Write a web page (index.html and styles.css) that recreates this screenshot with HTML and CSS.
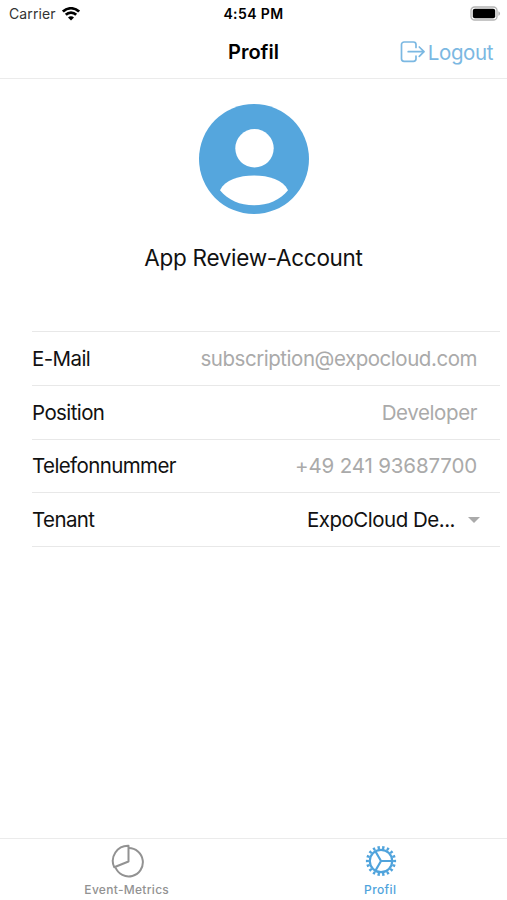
FILE: index.html
```
<!DOCTYPE html>
<html lang="de">
    <head>
        <meta charset="utf-8">
        <title>Profil</title>
        <link rel="stylesheet" href="styles.css">
    </head>
    <body>
        <div class="status">
            <div class="carrier">
                <span>Carrier</span>
                <svg class="wifi" width="18" height="14" viewBox="0 0 18 14">
                    <g fill="none" stroke="#000" stroke-width="2.7">
                        <path d="M0.9 4.6a11.5 11.5 0 0 1 16.2 0"/>
                        <path d="M3.8 7.8a7.4 7.4 0 0 1 10.4 0"/>
                    </g>
                    <path d="M9 13.6L6 10.6a4.2 4.2 0 0 1 6 0z"/>
                </svg>
            </div>
            <div class="time">4:54 PM</div>
            <svg class="battery" width="31" height="15" viewBox="0 0 31 15">
                <rect x="1" y="1" width="26" height="13" rx="3.6" fill="#fff" stroke="#b4b4b4" stroke-width="1.3"/>
                <rect x="2.8" y="2.8" width="22.4" height="9.4" rx="2"/>
                <path d="M28.4 5.2c2.2 1 2.2 3.6 0 4.6z" fill="#b4b4b4"/>
            </svg>
        </div>
        <div class="navbar">
            <h1 class="title">Profil</h1>
            <a class="logout">
                <svg width="25" height="22" viewBox="0 0 25 22" fill="none" stroke="#7bb8e2" stroke-width="1.7" stroke-linecap="round" stroke-linejoin="round">
                    <path d="M16 6.4V3.6a2.6 2.6 0 0 0-2.6-2.6H4.1A2.6 2.6 0 0 0 1.5 3.600v14.200a2.600 2.600 0 0 0 2.600 2.600h9.300a2.600 2.600 0 0 0 2.600-2.600V15"/>
                    <path d="M8.200 10.700H24M19.300 6l4.700 4.700-4.700 4.700"/>
                </svg>
                <span>Logout</span>
            </a>
        </div>

        <div class="profile">
            <svg width="110" height="110" viewBox="0 0 110 110">
                <circle cx="55" cy="55" r="55" fill="#55a6dd"/>
                <circle cx="55.5" cy="44.3" r="19.2" fill="#fff"/>
                <path d="M21 86.2C26 76 40 71.6 55 71.6s29 4.4 34 14.6C81 96 69 101.3 55 101.3S29 96 21 86.2z" fill="#fff"/>
            </svg>
            <h2 class="name">App Review-Account</h2>
        </div>

        <ul class="list">
            <li><span class="label">E-Mail</span><span class="value mail">subscription@expocloud.com</span></li>
            <li><span class="label">Position</span><span class="value developer">Developer</span></li>
            <li><span class="label">Telefonnummer</span><span class="value phone">+49 241 93687700</span></li>
            <li><span class="label">Tenant</span><span class="value tenant">ExpoCloud De...</span><span class="arrow"></span></li>
        </ul>

        <div class="tabs">
            <a class="tab">
                <svg width="34" height="34" viewBox="0 0 34 34" fill="none" stroke="#929292" stroke-width="2" stroke-linejoin="round">
                    <path d="M18.5 4A14.2 14.2 0 1 1 5.5 23.5"/>
                    <path d="M18.5 1.7V17.5L4.2 23.2A15.2 15.2 0 0 1 18.5 1.7z"/>
                </svg>
                <span class="metrics">Event-Metrics</span>
            </a>
            <a class="tab active">
                <svg width="34" height="34" viewBox="0 0 34 34" fill="none" stroke="#4fa3dc">
                    <circle cx="18" cy="17" r="11.2" stroke-width="2.2"/>
                    <circle cx="18" cy="17" r="13.6" stroke-width="3" pathLength="36" stroke-dasharray="1 1" stroke-dashoffset="0.5"/>
                    <path d="M18 17H29M18 17L12.5 7.5M18 17L12.5 26.5" stroke-width="2.2"/>
                </svg>
                <span class="profil">Profil</span>
            </a>
        </div>
    </body>
</html>
```

FILE: styles.css
```
*{
    box-sizing: border-box;
}
body{
    margin: 0;
    height: 900px;
    display: flex;
    flex-direction: column;
    background-color: #fff;
    color: #111;
    font-family: Inter, sans-serif;
    font-size: 20.5px;
    overflow: hidden;
}
svg{
    display: block;
    flex-shrink: 0;
}
h1, h2{
    margin: 0;
}
.status{
    display: grid;
    grid-template-columns: 1fr auto 1fr;
    align-items: center;
    height: 27px;
    padding: 0 6px 0 9px;
}
.carrier{
    display: flex;
    align-items: center;
    gap: 6px;
    font-size: 14px;
    letter-spacing: 0.1px;
    color: #333;
}
.time{
    margin-right: 3px;
    font-size: 14px;
    font-weight: 600;
    letter-spacing: 0.4px;
    color: #000;
}
.battery{
    justify-self: end;
}
.navbar{
    display: grid;
    grid-template-columns: 1fr auto 1fr;
    align-items: center;
    height: 52px;
    padding: 0 14px 1px;
    border-bottom: 1px solid #ebebeb;
}
.title{
    grid-column: 2;
    font-size: 20px;
    font-weight: 600;
    color: #000;
}
.logout{
    display: flex;
    align-items: center;
    justify-content: flex-end;
    gap: 3px;
    letter-spacing: -0.4px;
    color: #7bb8e2;
}
.profile{
    display: flex;
    flex-direction: column;
    align-items: center;
    gap: 29px;
    height: 252px;
    padding-top: 25px;
}
.name{
    font-size: 22.5px;
    font-weight: 400;
    line-height: 30px;
    letter-spacing: -0.3px;
}
.list{
    list-style: none;
    margin: 0 7px 0 32px;
    padding: 0;
    border-top: 1px solid #e8e8e8;
}
.list li{
    display: flex;
    align-items: center;
    height: 53.8px;
    padding: 0 23px 0 0;
    border-bottom: 1px solid #e8e8e8;
}
.label{
    flex: 1;
    letter-spacing: -0.6px;
}
.value{
    color: #aaa;
}
.mail{
    letter-spacing: -0.46px;
}
.developer{
    letter-spacing: -0.4px;
}
.phone{
    letter-spacing: -0.15px;
}
.tenant{
    letter-spacing: -0.5px;
    color: #111;
}
.arrow{
    margin: 0 -3px 0 13px;
    border: 6px solid transparent;
    border-top-color: #aaa;
    border-bottom: 0;
}
.tabs{
    display: flex;
    height: 62px;
    margin-top: auto;
    border-top: 1px solid #ebebeb;
}
.tab{
    flex: 1;
    display: flex;
    flex-direction: column;
    align-items: center;
    padding-top: 5px;
    font-size: 12px;
    font-weight: 500;
    line-height: 24px;
    color: #929292;
}
.metrics{
    letter-spacing: 0.3px;
}
.profil{
    letter-spacing: 0.4px;
}
.active{
    color: #4fa3dc;
}
```
